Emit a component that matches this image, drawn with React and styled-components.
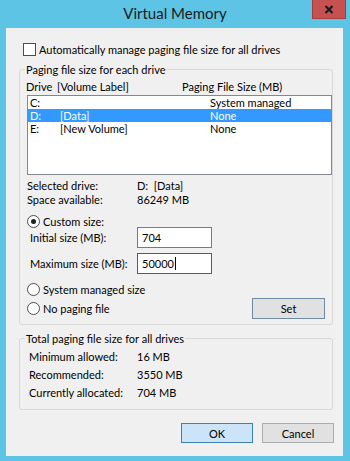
import { styled, createGlobalStyle } from "styled-components";

const GlobalStyle = createGlobalStyle`
  html, body {
    margin: 0;
    padding: 0;
    background: #5ec4e6;
  }
  * {
    box-sizing: border-box;
  }
`;

const drives = [
  { letter: "C:", label: "", size: "System managed" },
  { letter: "D:", label: "[Data]", size: "None", selected: true },
  { letter: "E:", label: "[New Volume]", size: "None" },
];

const totals = [
  { label: "Minimum allowed:", value: "16 MB" },
  { label: "Recommended:", value: "3550 MB" },
  { label: "Currently allocated:", value: "704 MB" },
];

const CloseGlyph = () => (
  <svg width="10" height="9" viewBox="0 0 10 9">
    <path d="M1.5 1 L8.5 8 M8.5 1 L1.5 8" stroke="#1c1c1c" strokeWidth="2.2" />
  </svg>
);

const App = () => {
  return (
    <>
      <GlobalStyle />
      <Window>
        <TitleBar>
          <span />
          <Title>Virtual Memory</Title>
          <CloseButton>
            <CloseGlyph />
          </CloseButton>
        </TitleBar>

        <Client>
          <CheckRow>
            <CheckBox />
            <span>Automatically manage paging file size for all drives</span>
          </CheckRow>

          <Group $pad="0 0 5px 6px">
            <Legend $shift={-1}>Paging file size for each drive</Legend>
            <ListHeader>
              <span>Drive</span>
              <span>[Volume Label]</span>
              <span>Paging File Size (MB)</span>
            </ListHeader>
            <ListBox>
              {drives.map((d) => (
                <ListRow key={d.letter} $selected={d.selected}>
                  <span>{d.letter}</span>
                  <span>{d.label}</span>
                  <span>{d.size}</span>
                </ListRow>
              ))}
            </ListBox>

            <InfoBlock>
              <InfoRow>
                <span>Selected drive:</span>
                <span>D:&nbsp; [Data]</span>
              </InfoRow>
              <InfoRow>
                <span>Space available:</span>
                <span>86249 MB</span>
              </InfoRow>
            </InfoBlock>

            <RadioRow $top={7}>
              <Radio $checked />
              <span>Custom size:</span>
            </RadioRow>

            <SizeRow $top={-1}>
              <span>Initial size (MB):</span>
              <Field>704</Field>
            </SizeRow>
            <SizeRow $top={5}>
              <span>Maximum size (MB):</span>
              <Field $focused>
                50000
                <Caret />
              </Field>
            </SizeRow>

            <RadioRow $top={8}>
              <Radio />
              <span>System managed size</span>
            </RadioRow>

            <SetRow>
              <RadioRow>
                <Radio />
                <span>No paging file</span>
              </RadioRow>
              <Button $variant="set">Set</Button>
            </SetRow>
          </Group>

          <Group $top={7} $pad="3px 0 7px 9px">
            <Legend $shift={-4}>Total paging file size for all drives</Legend>
            {totals.map((t) => (
              <TotalRow key={t.label}>
                <span>{t.label}</span>
                <span>{t.value}</span>
              </TotalRow>
            ))}
          </Group>

          <ButtonRow>
            <Button $variant="default">OK</Button>
            <Button>Cancel</Button>
          </ButtonRow>
        </Client>
      </Window>
    </>
  );
};

const Window = styled.div`
  width: 350px;
  height: 461px;
  background: #5ec4e6;
  display: flex;
  flex-direction: column;
  font-family: Lato, "Liberation Sans", sans-serif;
  font-size: 11px;
  color: #000;
`;

const TitleBar = styled.div`
  height: 28px;
  display: grid;
  grid-template-columns: 1fr auto 1fr;
  align-items: start;
`;

const Title = styled.div`
  font-size: 15px;
  line-height: 27px;
  color: #1b1b1b;
`;

const CloseButton = styled.div`
  justify-self: end;
  margin-right: 4px;
  width: 34px;
  height: 19px;
  background: #c75050;
  border: 1px solid #a53d3d;
  border-top: none;
  display: flex;
  align-items: center;
  justify-content: center;
`;

const Client = styled.div`
  flex: none;
  height: 428px;
  margin: 0 7px 0 6px;
  background: #f0f0f0;
  padding: 0 10px 0 13px;
  display: flex;
  flex-direction: column;
`;

const CheckRow = styled.div`
  margin: 15px 0 0 4px;
  height: 13px;
  display: flex;
  align-items: center;
  gap: 3px;
  line-height: 13px;
  white-space: nowrap;
`;

const CheckBox = styled.span`
  width: 13px;
  height: 13px;
  flex: none;
  background: #fff;
  border: 1px solid #4d4d4d;
`;

const Group = styled.fieldset`
  margin: ${(p) => p.$top ?? 7}px 0 0;
  padding: ${(p) => p.$pad};
  border: 1px solid #d9d9d9;
  border-radius: 3px;
  min-width: 0;
  display: flex;
  flex-direction: column;
`;

const Legend = styled.legend`
  padding: 0 1px;
  margin-left: ${(p) => p.$shift}px;
  line-height: 13px;
  white-space: nowrap;
`;

const ListHeader = styled.div`
  display: grid;
  grid-template-columns: 31px 125px 1fr;
  margin-top: 4px;
  line-height: 13px;
  white-space: nowrap;
`;

const ListBox = styled.div`
  margin: 2px 0 0 1px;
  height: 80px;
  background: #fff;
  border: 1px solid #828790;
`;

const ListRow = styled.div`
  display: grid;
  grid-template-columns: 30px 150px 1fr;
  height: 13px;
  line-height: 13px;
  padding-left: 2px;
  white-space: nowrap;
  background: ${(p) => (p.$selected ? "#3399ff" : "transparent")};
  color: ${(p) => (p.$selected ? "#fff" : "#000")};
`;

const InfoBlock = styled.div`
  margin: 4px 0 0 1px;
  display: flex;
  flex-direction: column;
`;

const InfoRow = styled.div`
  display: grid;
  grid-template-columns: 110px 1fr;
  line-height: 14px;
  white-space: nowrap;
`;

const RadioRow = styled.div`
  margin: ${(p) => p.$top ?? 0}px 0 0 1px;
  height: 14px;
  display: flex;
  align-items: center;
  gap: 3px;
  white-space: nowrap;
`;

const Radio = styled.span`
  width: 13px;
  height: 13px;
  flex: none;
  border-radius: 50%;
  background: #fff;
  border: 1px solid #4d4d4d;
  display: grid;
  place-items: center;

  &::after {
    content: "";
    width: 5px;
    height: 5px;
    border-radius: 50%;
    background: #1f1f1f;
    display: ${(p) => (p.$checked ? "block" : "none")};
  }
`;

const SizeRow = styled.div`
  margin: ${(p) => p.$top}px 0 0 4px;
  display: grid;
  grid-template-columns: 107px 75px;
  align-items: center;
  white-space: nowrap;
`;

const Field = styled.div`
  height: 21px;
  background: #fff;
  border: 1px solid ${(p) => (p.$focused ? "#2e6792" : "#7a7a7a")};
  padding: 0 4px;
  display: flex;
  align-items: center;
`;

const Caret = styled.span`
  width: 1px;
  height: 13px;
  margin-left: 1px;
  background: #000;
`;

const SetRow = styled.div`
  margin: 2px 7px 0 0;
  height: 21px;
  display: flex;
  align-items: center;
  justify-content: space-between;
`;

const Button = styled.div`
  width: ${(p) => (p.$variant === "set" ? 73 : 72)}px;
  height: ${(p) => (p.$variant === "set" ? 21 : 20)}px;
  display: flex;
  align-items: center;
  justify-content: center;
  background: ${(p) => (p.$variant === "default" ? "#cce4f7" : "#e1e1e1")};
  border: 1px solid
    ${(p) =>
      p.$variant === "default"
        ? "#3c7fb1"
        : p.$variant === "set"
        ? "#6f8ba3"
        : "#adadad"};
`;

const TotalRow = styled.div`
  display: grid;
  grid-template-columns: 108px 1fr;
  line-height: 18px;
  white-space: nowrap;
`;

const ButtonRow = styled.div`
  margin: 13px -1px 0 0;
  display: flex;
  justify-content: flex-end;
  gap: 9px;
`;

export default App;
